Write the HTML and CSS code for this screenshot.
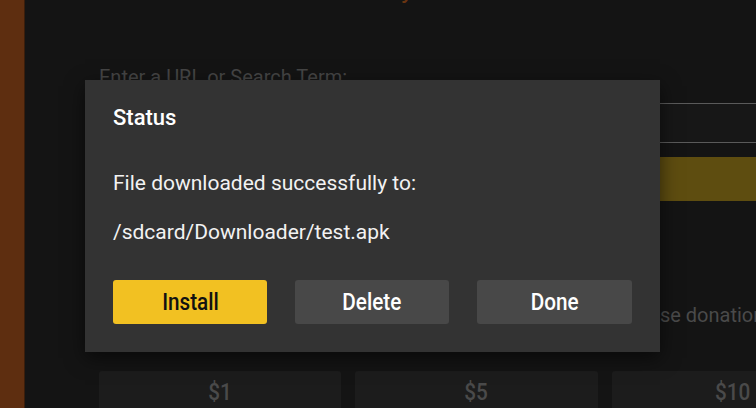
FILE: index.html
```html
<!DOCTYPE html>
<html>
<head>
<meta charset="utf-8">
<link rel="stylesheet" href="styles.css">
</head>
<body>
<div class="app">
  <aside class="sidebar"></aside>
  <main class="main">
    <h1 class="title">Downloader by AFTVnews</h1>
    <label class="label">Enter a URL or Search Term:</label>
    <div class="input"></div>
    <div class="go"></div>
    <p class="note">Please use donation buttons below:</p>
    <div class="donations">
      <div class="don"><span class="cond">$1</span></div>
      <div class="don"><span class="cond">$5</span></div>
      <div class="don"><span class="cond">$10</span></div>
    </div>
  </main>
</div>
<div class="dialog">
  <h2 class="dlg-title">Status</h2>
  <p class="dlg-text">File downloaded successfully to:</p>
  <p class="dlg-text path">/sdcard/Downloader/test.apk</p>
  <div class="actions">
    <button class="btn primary"><span class="cond">Install</span></button>
    <button class="btn"><span class="cond">Delete</span></button>
    <button class="btn"><span class="cond">Done</span></button>
  </div>
</div>
</body>
</html>
```
FILE: styles.css
```css
html, body {
  margin: 0;
  padding: 0;
  width: 756px;
  height: 408px;
  overflow: hidden;
  background: #141414;
  font-family: Roboto, "Noto Sans", sans-serif;
}
.app {
  display: flex;
  height: 408px;
}
.sidebar {
  width: 24px;
  flex: none;
  background: #5e2e10;
  border-right: 1px solid #3a1e0c;
}
.main {
  flex: 1;
  padding-left: 74px;
  overflow: hidden;
}
.title {
  margin: -26px 0 0 0;
  height: 30px;
  font-size: 26px;
  font-weight: 400;
  color: #6a3411;
  padding-left: 143px;
  line-height: 30px;
  white-space: nowrap;
}
.label {
  display: block;
  margin-top: 61px;
  font-size: 20px;
  line-height: 24px;
  color: #454545;
  white-space: nowrap;
}
.input {
  margin-top: 14px;
  height: 38px;
  border-top: 1px solid #5a5a5a;
  border-bottom: 1px solid #5a5a5a;
  background: #171717;
  margin-right: -20px;
}
.go {
  margin-top: 14px;
  height: 44px;
  background: #5e4d10;
  margin-right: -20px;
}
.note {
  margin: 102px 0 0 0;
  padding-left: 485px;
  font-size: 20px;
  line-height: 24px;
  color: #4a4a4a;
  white-space: nowrap;
}
.donations {
  margin-top: 44px;
  display: grid;
  grid-template-columns: 242px 243px 242px;
  gap: 14px;
}
.don {
  height: 44px;
  background: #1c1c1c;
  border-radius: 3px;
  display: flex;
  justify-content: center;
  padding-top: 8px;
  font-size: 23px;
  font-weight: 500;
  color: #4a4a4a;
}
.cond {
  display: inline-block;
  transform: scaleX(0.9);
}
.dialog {
  position: absolute;
  left: 85px;
  top: 80px;
  width: 575px;
  height: 272px;
  box-sizing: border-box;
  background: #333333;
  padding: 25px 28px 0 28px;
  box-shadow: 0 6px 18px rgba(0, 0, 0, 0.55);
}
.dlg-title {
  margin: 0;
  font-size: 22px;
  line-height: 26px;
  font-weight: 500;
  color: #ffffff;
}
.dlg-text {
  margin: 0;
  font-size: 21px;
  line-height: 26px;
  color: #f2f2f2;
}
.dlg-title + .dlg-text {
  margin-top: 39px;
}
.path {
  margin-top: 23px;
}
.actions {
  margin-top: 35px;
  display: flex;
  gap: 28px;
}
.btn {
  width: 154px;
  height: 44px;
  border: none;
  border-radius: 3px;
  background: #484848;
  color: #ffffff;
  font-family: Roboto, "Noto Sans", sans-serif;
  font-size: 23px;
  font-weight: 500;
  padding: 0;
  display: flex;
  align-items: center;
  justify-content: center;
}
.btn.primary {
  background: #f2c122;
  color: #111111;
}
.btn:nth-child(3) {
  width: 155px;
}
```
